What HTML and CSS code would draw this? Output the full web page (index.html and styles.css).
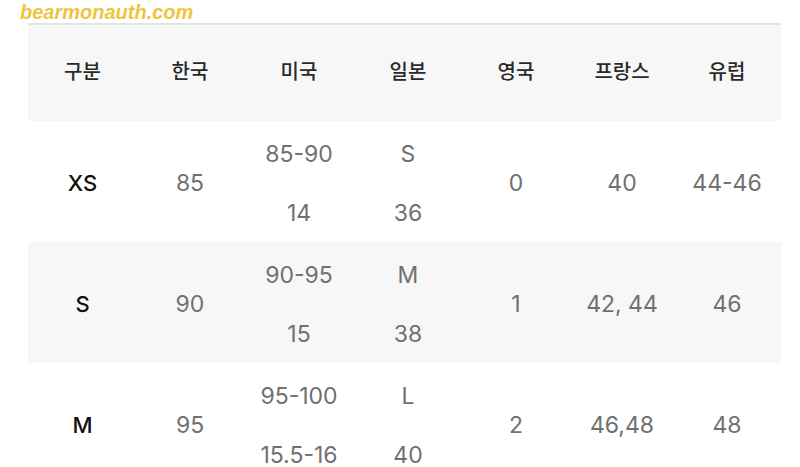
FILE: index.html
```html
<!DOCTYPE html>
<html lang="ko">
<head>
<meta charset="utf-8">
<link rel="stylesheet" href="styles.css">
</head>
<body>
<div class="mark">bearmonauth.com</div>
<div class="table">
  <div class="row head">
    <div class="cell">구분</div>
    <div class="cell">한국</div>
    <div class="cell">미국</div>
    <div class="cell">일본</div>
    <div class="cell">영국</div>
    <div class="cell">프랑스</div>
    <div class="cell">유럽</div>
  </div>
  <div class="row">
    <div class="cell size">XS</div>
    <div class="cell">85</div>
    <div class="cell stack"><span>85-90</span><span>14</span></div>
    <div class="cell stack"><span>S</span><span>36</span></div>
    <div class="cell">0</div>
    <div class="cell">40</div>
    <div class="cell">44-46</div>
  </div>
  <div class="row alt">
    <div class="cell size">S</div>
    <div class="cell">90</div>
    <div class="cell stack"><span>90-95</span><span>15</span></div>
    <div class="cell stack"><span>M</span><span>38</span></div>
    <div class="cell">1</div>
    <div class="cell">42, 44</div>
    <div class="cell">46</div>
  </div>
  <div class="row">
    <div class="cell size">M</div>
    <div class="cell">95</div>
    <div class="cell stack"><span>95-100</span><span>15.5-16</span></div>
    <div class="cell stack"><span>L</span><span>40</span></div>
    <div class="cell">2</div>
    <div class="cell">46,48</div>
    <div class="cell">48</div>
  </div>
</div>
</body>
</html>
```
FILE: styles.css
```css
html, body {
  margin: 0;
  padding: 0;
  background: #fff;
  overflow: hidden;
}
body {
  width: 800px;
  height: 467px;
  font-family: "Inter", "Noto Sans CJK KR", sans-serif;
}
.mark {
  height: 23px;
  padding-left: 20px;
  font-family: "Liberation Sans", Arial, sans-serif;
  font-weight: bold;
  font-style: italic;
  font-size: 20px;
  line-height: 25px;
  color: #f1c43e;
}
.table {
  margin: 0 19px 0 28px;
  border-top: 2px solid #e3e3e3;
}
.row {
  display: grid;
  grid-template-columns: 109px 106px 112px 106px 110px 102px 108px;
  height: 118px;
  padding-top: 3px;
  color: #707070;
  font-size: 23px;
  font-weight: 400;
}
.row.head {
  height: 90px;
  padding-top: 0;
  padding-bottom: 6px;
  background: #f7f7f7;
  color: #2a2a2a;
  font-family: "Noto Sans CJK KR", sans-serif;
  font-size: 20px;
  font-weight: 500;
}
.row.alt {
  background: #f7f7f7;
}
.cell {
  display: flex;
  align-items: center;
  justify-content: center;
}
.cell.size {
  color: #111;
  font-weight: 500;
  font-size: 22px;
}
.cell.stack {
  flex-direction: column;
  justify-content: space-around;
}
.cell.stack span {
  display: flex;
  align-items: center;
  height: 59px;
}
```
